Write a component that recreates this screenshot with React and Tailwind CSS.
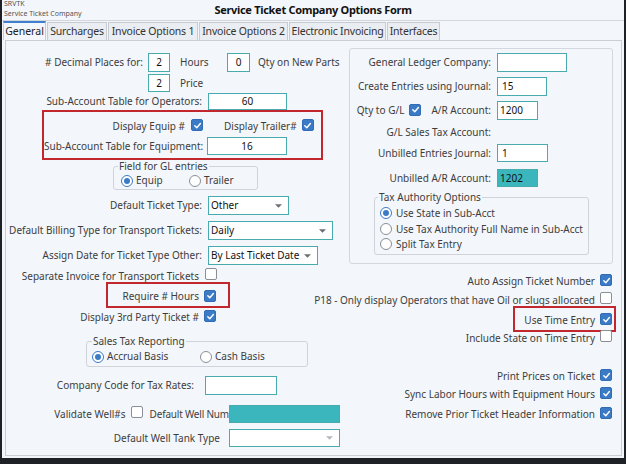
function Check({ on }) {
    if (on) {
        return (
            <span className="inline-flex w-[12px] h-[12px] shrink-0 items-center justify-center rounded-[2px] bg-[#3b7bc6] border border-[#306db6]">
                <svg viewBox="0 0 10 10" className="w-[9px] h-[9px]">
                    <path d="M2 5.2 L4.2 7.4 L8.2 2.8" fill="none" stroke="white" strokeWidth="1.6" strokeLinecap="round" strokeLinejoin="round" />
                </svg>
            </span>
        );
    }
    return <span className="inline-block w-[12px] h-[12px] shrink-0 rounded-[2px] border border-[#8a8f96] bg-white" />;
}

function Radio({ on }) {
    return (
        <span className={`inline-flex w-[12px] h-[12px] shrink-0 items-center justify-center rounded-full bg-white border ${on ? "border-[#3b7bc6]" : "border-[#8a8f96]"}`}>
            {on && <span className="w-[6px] h-[6px] rounded-full bg-[#3b7bc6]" />}
        </span>
    );
}

function Field({ className = "", children }) {
    return (
        <div className={`flex items-center shrink-0 border border-[#48abad] px-[2px] text-[#111] ${className}`}>
            {children}
        </div>
    );
}

function Select({ className = "", value, light }) {
    return (
        <div className={`flex items-center justify-between shrink-0 border border-[#48abad] bg-white pl-[2px] pr-[6px] text-[#111] ${className}`}>
            <span className="whitespace-nowrap">{value}</span>
            <svg viewBox="0 0 8 4" className="w-[7px] h-[4px]">
                <path d="M0 0 L8 0 L4 4 Z" fill={light ? "#b5b9be" : "#6b6f74"} />
            </svg>
        </div>
    );
}

function CheckRow({ label, on, className = "" }) {
    return (
        <div className={`flex items-center whitespace-nowrap ${className}`}>
            <span>{label}</span>
            <span className="ml-[5px]">
                <Check on={on} />
            </span>
        </div>
    );
}

const tabs = [
    { name: "Surcharges", w: "w-[60px]" },
    { name: "Invoice Options 1", w: "w-[90px]" },
    { name: "Invoice Options 2", w: "w-[89px]" },
    { name: "Electronic Invoicing", w: "w-[97px]" },
    { name: "Interfaces", w: "w-[53px]" },
];

export default function App() {
    return (
        <div className="w-[626px] h-[464px] flex flex-col bg-[#f3f6fa] border-l-2 border-r-2 border-b-[6px] border-[#1e2126] font-['Noto_Sans',sans-serif] text-[10px] text-[#3d3d3d] overflow-hidden">
            {/* title bar */}
            <div className="h-[21px] shrink-0 grid grid-cols-[1fr_auto_1fr] items-center border-b border-[#d3d7dd]">
                <div className="self-start pl-[2px] text-[7px] leading-[8px] text-[#555]">
                    <div>SRVTK</div>
                    <div className="mt-[2px]">Service Ticket Company</div>
                </div>
                <div className="font-bold text-[11px] tracking-[-0.3px] text-[#111]">
                    Service Ticket Company Options Form
                </div>
                <div />
            </div>

            {/* tabs */}
            <div className="h-[19px] shrink-0 flex items-end gap-[1px] pl-[1px] text-[10.5px]">
                <div className="w-[43px] h-[19px] flex items-center justify-center border-t-2 border-t-[#3e7fcf] border-x border-x-[#c7ccd3] bg-[#f3f6fa] text-[#222]">
                    General
                </div>
                {tabs.map((t) => (
                    <div
                        key={t.name}
                        className={`${t.w} h-[18px] flex items-center justify-center border border-b-0 border-[#c7ccd3] bg-[#eaedf1] text-[#333] whitespace-nowrap tracking-[-0.2px]`}
                    >
                        {t.name}
                    </div>
                ))}
            </div>

            {/* panel */}
            <div className="flex-1 min-h-0 ml-[3px] mr-[2px] mb-[2px] border border-[#c9ced5] flex">
                {/* left column */}
                <div className="w-[334px] shrink-0 flex flex-col">
                    <div className="mt-[12px] h-[19px] flex items-center">
                        <span className="w-[137px] text-right whitespace-nowrap"># Decimal Places for:</span>
                        <Field className="ml-[5px] w-[22px] h-[19px] justify-center bg-white">2</Field>
                        <span className="ml-[10px] w-[47px]">Hours</span>
                        <Field className="w-[23px] h-[19px] justify-center bg-white">0</Field>
                        <span className="ml-[8px] whitespace-nowrap">Qty on New Parts</span>
                    </div>
                    <div className="mt-[2px] h-[18px] flex items-center pl-[142px]">
                        <Field className="w-[22px] h-[18px] justify-center bg-white">2</Field>
                        <span className="ml-[10px]">Price</span>
                    </div>
                    <div className="mt-[1px] h-[17px] flex items-center">
                        <span className="w-[196px] text-right whitespace-nowrap">Sub-Account Table for Operators:</span>
                        <Field className="ml-[6px] w-[79px] h-[17px] justify-center bg-white">60</Field>
                    </div>

                    <div className="ml-[36px] w-[281px] h-[50px] border-2 border-[#c1272d] flex flex-col">
                        <div className="mt-[6px] h-[16px] flex items-center">
                            <span className="w-[141px] text-right whitespace-nowrap">Display Equip #</span>
                            <span className="ml-[6px]"><Check on /></span>
                            <span className="ml-[21px] whitespace-nowrap">Display Trailer#</span>
                            <span className="ml-[5px]"><Check on /></span>
                        </div>
                        <div className="mt-[3px] h-[18px] flex items-center">
                            <span className="w-[158px] text-right whitespace-nowrap">Sub-Account Table for Equipment:</span>
                            <Field className="ml-[5px] w-[80px] h-[18px] justify-center bg-white">16</Field>
                        </div>
                    </div>

                    <fieldset className="ml-[107px] w-[145px] border border-[#cfd4db] rounded-[3px] px-[4px] pb-[2px]">
                        <legend className="px-[1px] leading-[13px]">Field for GL entries</legend>
                        <div className="mt-[1px] h-[13px] flex items-center pl-[3px]">
                            <div className="w-[68px] flex items-center">
                                <Radio on />
                                <span className="ml-[3px]">Equip</span>
                            </div>
                            <div className="flex items-center">
                                <Radio />
                                <span className="ml-[3px]">Trailer</span>
                            </div>
                        </div>
                    </fieldset>

                    <div className="mt-[6px] h-[19px] flex items-center">
                        <span className="w-[196px] text-right whitespace-nowrap">Default Ticket Type:</span>
                        <Select className="ml-[6px] w-[81px] h-[19px]" value="Other" />
                    </div>
                    <div className="mt-[6px] h-[19px] flex items-center">
                        <span className="w-[196px] text-right whitespace-nowrap">Default Billing Type for Transport Tickets:</span>
                        <Select className="ml-[6px] w-[125px] h-[19px]" value="Daily" />
                    </div>
                    <div className="mt-[6px] h-[19px] flex items-center">
                        <span className="w-[196px] text-right whitespace-nowrap">Assign Date for Ticket Type Other:</span>
                        <Select className="ml-[6px] w-[110px] h-[19px]" value="By Last Ticket Date" />
                    </div>

                    <div className="mt-[5px] h-[12px] flex items-center">
                        <span className="w-[193px] text-right whitespace-nowrap">Separate Invoice for Transport Tickets</span>
                        <span className="ml-[6px]"><Check /></span>
                    </div>

                    <div className="ml-[100px] w-[124px] h-[26px] border-2 border-[#c1272d] pt-[3px] flex items-center">
                        <span className="w-[91px] text-right whitespace-nowrap">Require # Hours</span>
                        <span className="ml-[5px]"><Check on /></span>
                    </div>

                    <div className="mt-[2px] h-[14px] flex items-center">
                        <span className="w-[193px] text-right whitespace-nowrap">Display 3rd Party Ticket #</span>
                        <span className="ml-[5px]"><Check on /></span>
                    </div>

                    <fieldset className="mt-[11px] ml-[80px] w-[222px] border border-[#cfd4db] rounded-[3px] px-[5px] pb-[3px]">
                        <legend className="px-[1px] leading-[13px]">Sales Tax Reporting</legend>
                        <div className="mt-[2px] h-[13px] flex items-center">
                            <div className="w-[108px] flex items-center">
                                <Radio on />
                                <span className="ml-[3px]">Accrual Basis</span>
                            </div>
                            <div className="flex items-center">
                                <Radio />
                                <span className="ml-[3px]">Cash Basis</span>
                            </div>
                        </div>
                    </fieldset>

                    <div className="mt-[9px] h-[19px] flex items-center">
                        <span className="w-[188px] text-right whitespace-nowrap">Company Code for Tax Rates:</span>
                        <Field className="ml-[11px] w-[72px] h-[19px] bg-white" />
                    </div>

                    <div className="mt-[10px] h-[18px] flex items-center">
                        <span className="w-[168px] text-right whitespace-nowrap">Validate Well#s</span>
                        <span className="ml-[5px]"><Check /></span>
                        <span className="ml-[7px] w-[88px] whitespace-nowrap tracking-[-0.2px]">Default Well Num</span>
                        <Field className="w-[111px] h-[18px] bg-[#3bb6bd]" />
                    </div>

                    <div className="mt-[6px] h-[18px] flex items-center">
                        <span className="w-[271px] text-right whitespace-nowrap">Default Well Tank Type</span>
                        <Select className="ml-[9px] w-[111px] h-[18px]" value="" light />
                    </div>
                </div>

                {/* right column */}
                <div className="flex-1 min-w-0 flex flex-col">
                    <div className="mt-[7px] ml-[9px] w-[264px] h-[216px] border border-[#d3d8df] rounded-[3px] flex flex-col">
                        <div className="mt-[4px] h-[19px] flex items-center">
                            <span className="w-[141px] text-right whitespace-nowrap">General Ledger Company:</span>
                            <Field className="ml-[6px] w-[70px] h-[19px] bg-white" />
                        </div>
                        <div className="mt-[5px] h-[19px] flex items-center">
                            <span className="w-[141px] text-right whitespace-nowrap">Create Entries using Journal:</span>
                            <Field className="ml-[6px] w-[50px] h-[19px] bg-white pl-[4px]">15</Field>
                        </div>
                        <div className="mt-[5px] h-[19px] flex items-center">
                            <div className="w-[141px] flex items-center justify-end whitespace-nowrap">
                                <span>Qty to G/L</span>
                                <span className="ml-[5px]"><Check on /></span>
                                <span className="ml-[10px]">A/R Account:</span>
                            </div>
                            <Field className="ml-[6px] w-[41px] h-[19px] bg-white">1200</Field>
                        </div>
                        <div className="mt-[4px] h-[16px] flex items-center">
                            <span className="w-[141px] text-right whitespace-nowrap">G/L Sales Tax Account:</span>
                        </div>
                        <div className="mt-[4px] h-[18px] flex items-center">
                            <span className="w-[141px] text-right whitespace-nowrap">Unbilled Entries Journal:</span>
                            <Field className="ml-[6px] w-[51px] h-[18px] bg-white pl-[4px]">1</Field>
                        </div>
                        <div className="mt-[7px] h-[18px] flex items-center">
                            <span className="w-[141px] text-right whitespace-nowrap">Unbilled A/R Account:</span>
                            <Field className="ml-[6px] w-[41px] h-[18px] bg-[#3bb6bd] text-[#0d2a4a]">1202</Field>
                        </div>

                        <fieldset className="mt-[4px] ml-[24px] w-[209px] border border-[#cfd4db] rounded-[3px] px-[5px] pb-[3px]">
                            <legend className="-ml-[2px] px-[1px] leading-[13px]">Tax Authority Options</legend>
                            <div className="mt-[2px] h-[14px] flex items-center">
                                <Radio on />
                                <span className="ml-[4px] whitespace-nowrap">Use State in Sub-Acct</span>
                            </div>
                            <div className="mt-[2px] h-[14px] flex items-center">
                                <Radio />
                                <span className="ml-[4px] whitespace-nowrap">Use Tax Authority Full Name in Sub-Acct</span>
                            </div>
                            <div className="mt-[1px] h-[14px] flex items-center">
                                <Radio />
                                <span className="ml-[4px] whitespace-nowrap">Split Tax Entry</span>
                            </div>
                        </fieldset>
                    </div>

                    <div className="flex flex-col items-end pr-[9px]">
                        <CheckRow className="mt-[9px] h-[16px]" label="Auto Assign Ticket Number" on />
                        <CheckRow className="mt-[5px] h-[12px]" label="P18 - Only display Operators that have Oil or slugs allocated" />
                        <div className="-mr-[4px] w-[103px] h-[26px] border-2 border-[#c1272d] pt-[2px] pr-[2px] flex items-center justify-end">
                            <CheckRow label="Use Time Entry" on />
                        </div>
                        <CheckRow className="h-[12px]" label="Include State on Time Entry" />
                        <CheckRow className="mt-[24px] h-[16px]" label="Print Prices on Ticket" on />
                        <CheckRow className="mt-[2px] h-[16px]" label="Sync Labor Hours with Equipment Hours" on />
                        <CheckRow className="mt-[4px] h-[16px]" label="Remove Prior Ticket Header Information" on />
                    </div>
                </div>
            </div>
        </div>
    );
}
